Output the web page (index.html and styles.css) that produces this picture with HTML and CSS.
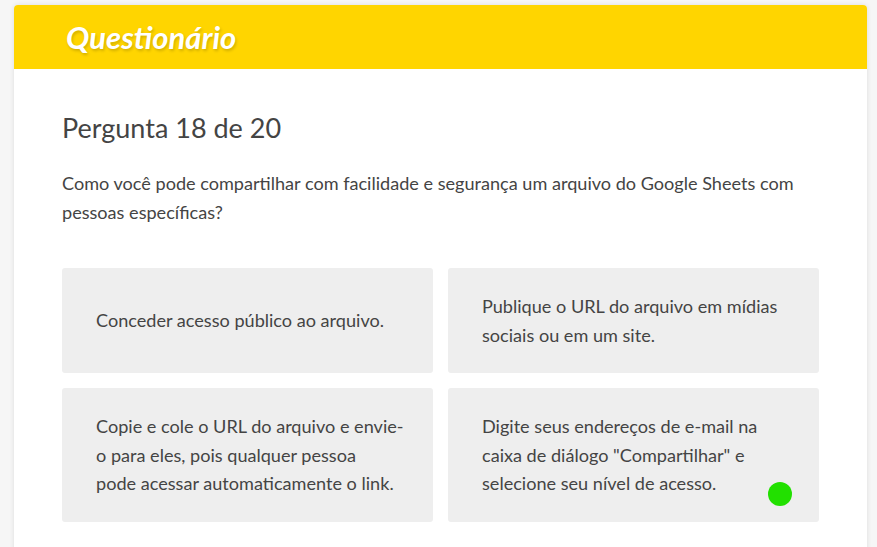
FILE: index.html
```html
<!DOCTYPE html>
<html lang="pt">
<head>
<meta charset="utf-8">
<link rel="stylesheet" href="styles.css">
</head>
<body>
<div class="card">
  <div class="header"><h1 class="title">Questionário</h1></div>
  <div class="content">
    <h2 class="counter">Pergunta 18 de 20</h2>
    <p class="question">Como você pode compartilhar com facilidade e segurança um arquivo do Google Sheets com pessoas específicas?</p>
    <div class="options">
      <div class="option">Conceder acesso público ao arquivo.</div>
      <div class="option">Publique o URL do arquivo em mídias sociais ou em um site.</div>
      <div class="option"><span>Copie e cole o URL do arquivo e envie-o para eles, pois qualquer pessoa<br>pode acessar automaticamente o link.</span></div>
      <div class="option">Digite seus endereços de e-mail na caixa de diálogo "Compartilhar" e selecione seu nível de acesso.<span class="dot"></span></div>
    </div>
  </div>
</div>
</body>
</html>
```
FILE: styles.css
```css
html, body { margin: 0; padding: 0; }
body {
  background: #f6f6f6;
  font-family: "Lato", "Liberation Sans", sans-serif;
  color: #444;
  padding: 5px 10px 0 14px;
}
.card {
  width: 853px;
  background: #fff;
  border-radius: 4px 4px 0 0;
  box-shadow: 0 0 5px rgba(0,0,0,0.1);
  height: 560px;
}
.header {
  background: #ffd500;
  height: 64px;
  border-radius: 4px 4px 0 0;
  display: flex;
  align-items: center;
  padding-left: 52px;
}
.title {
  margin: 0;
  color: #fff;
  font-size: 31px;
  font-style: italic;
  font-weight: 700;
  text-shadow: 1px 2px 3px rgba(0,0,0,0.18);
}
.content { padding: 39px 48px 0 48px; }
.counter {
  margin: 0;
  font-size: 27px;
  font-weight: 400;
  color: #444;
  line-height: 40px;
}
.question {
  margin: 21px 0 0;
  font-size: 18.1px;
  line-height: 29px;
}
.options {
  margin-top: 41px;
  display: grid;
  grid-template-columns: 371px 371px;
  column-gap: 15px;
  row-gap: 15px;
}
.option {
  position: relative;
  background: #eeeeee;
  border-radius: 3px;
  padding: 24px 26px 24px 34px;
  font-size: 18.1px;
  line-height: 28.5px;
  display: flex;
  align-items: center;
  min-height: 56px;
}
.dot {
  position: absolute;
  left: 320px;
  top: 94px;
  width: 24px;
  height: 24px;
  border-radius: 50%;
  background: #22e000;
}
```
